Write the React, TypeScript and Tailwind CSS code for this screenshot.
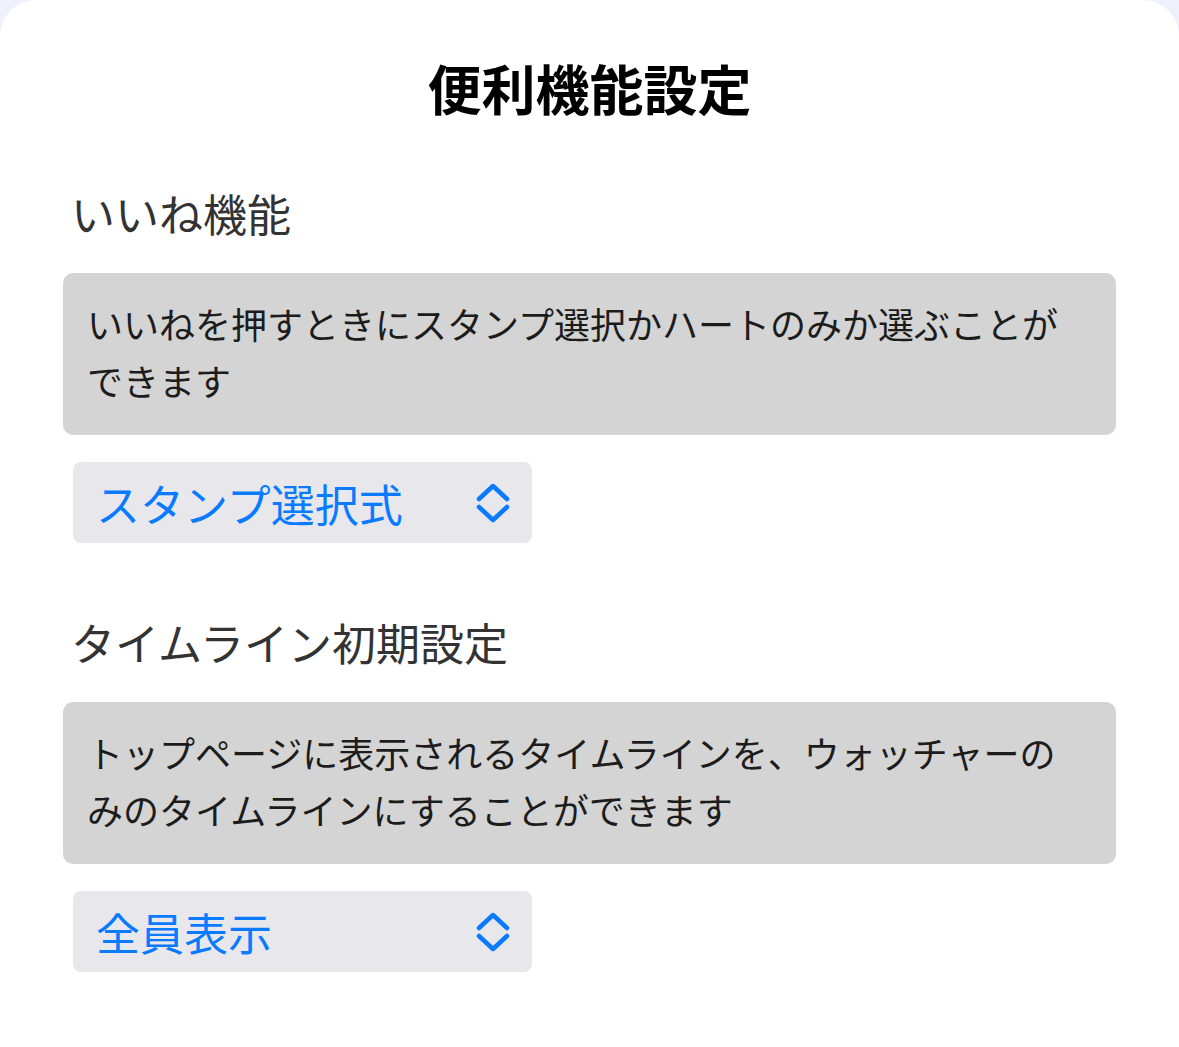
import React from "react";

const font = { fontFamily: '"Noto Sans CJK JP", "Noto Sans", sans-serif' };

function Chevrons() {
  return (
    <svg width="34" height="40" viewBox="0 0 34 40" fill="none">
      <path d="M3 16 L17 3 L31 16" stroke="#0a7aff" strokeWidth="4.5" strokeLinecap="round" strokeLinejoin="round" />
      <path d="M3 24 L17 37 L31 24" stroke="#0a7aff" strokeWidth="4.5" strokeLinecap="round" strokeLinejoin="round" />
    </svg>
  );
}

function Section({ title, lines, value }: { title: string; lines: string[]; value: string }) {
  return (
    <div className="flex flex-col">
      <div className="pl-[71px] text-[44px] leading-[60px] text-[#333333]">{title}</div>
      <div className="mt-[30px] ml-[63px] mr-[63px] rounded-[10px] bg-[#d4d4d4] pl-[24px] pt-[22px] pb-[26px] text-[36px] leading-[57px] text-[#1c1c1c]">
        {lines.map((l, i) => (
          <div key={i} className="whitespace-nowrap">{l}</div>
        ))}
      </div>
      <div className="mt-[27px] ml-[73px] flex h-[81px] w-[459px] items-center justify-between rounded-[8px] bg-[#e8e8ec] pl-[23px] pr-[22px]">
        <span className="text-[44px] leading-none text-[#0a7aff]">{value}</span>
        <Chevrons />
      </div>
    </div>
  );
}

export default function App() {
  return (
    <div className="min-h-[1047px] w-full bg-[#eef0fb]" style={font}>
      <div className="min-h-[1047px] w-full rounded-t-[36px] bg-white">
        <div className="flex flex-col">
          <h1 className="pt-[58px] text-center text-[54px] font-bold leading-[60px] text-black">便利機能設定</h1>
          <div className="mt-[65px]">
            <Section
              title="いいね機能"
              lines={["いいねを押すときにスタンプ選択かハートのみか選ぶことが", "できます"]}
              value="スタンプ選択式"
            />
          </div>
          <div className="mt-[69px]">
            <Section
              title="タイムライン初期設定"
              lines={["トップページに表示されるタイムラインを、ウォッチャーの", "みのタイムラインにすることができます"]}
              value="全員表示"
            />
          </div>
        </div>
      </div>
    </div>
  );
}
